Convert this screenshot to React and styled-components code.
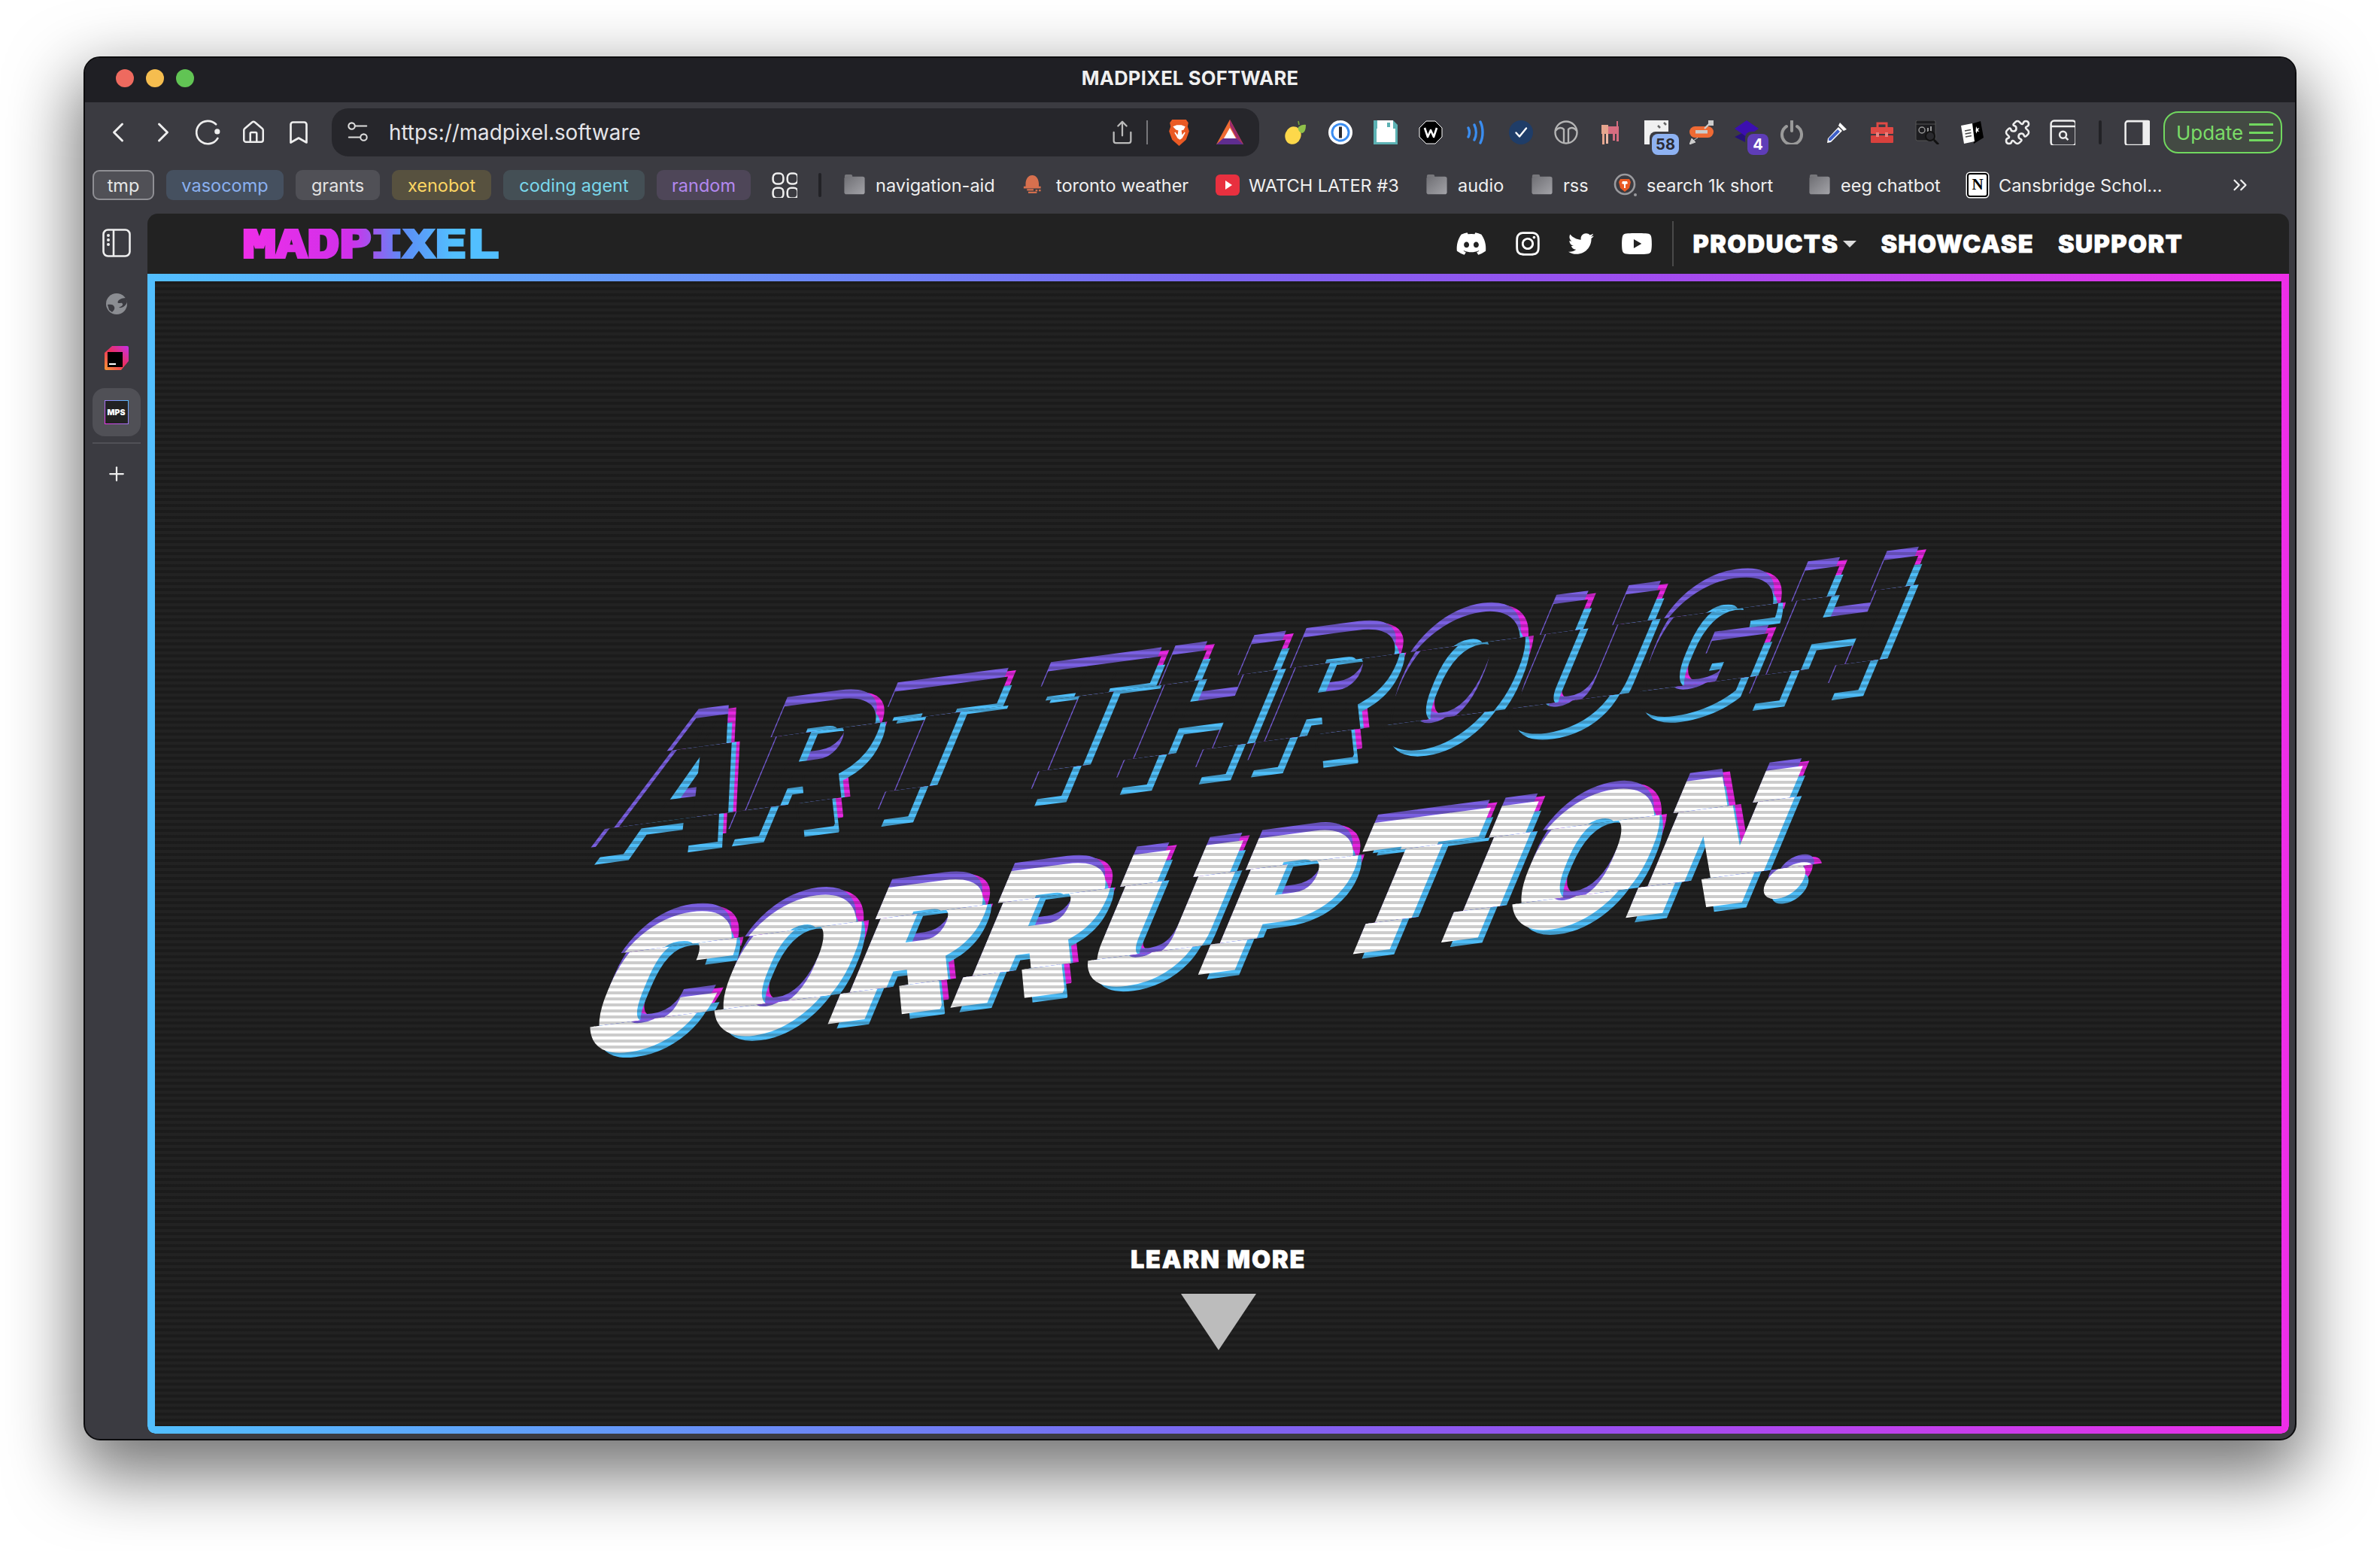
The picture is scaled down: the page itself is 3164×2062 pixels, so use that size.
import React from "react";
import styled, { createGlobalStyle } from "styled-components";
import { ChevronLeft, ChevronRight, House, Bookmark, Share, ChevronsRight, Plus, Puzzle } from "lucide-react";
import { FaDiscord, FaInstagram, FaTwitter, FaYoutube } from "react-icons/fa";

const Global = createGlobalStyle`
  html, body { margin: 0; padding: 0; background: #fff; }
  * { box-sizing: border-box; }
  body { font-family: Inter, "Liberation Sans", sans-serif; }
`;

const Desktop = styled.div`
  width: 3164px;
  height: 2062px;
  padding: 75px 111px 147px 111px;
  background: #fff;
  overflow: hidden;
`;
const Win = styled.div`
  width: 2942px;
  height: 1840px;
  display: flex;
  flex-direction: column;
  background: #3b3b41;
  border: 2px solid #0c0c0e;
  border-radius: 22px;
  overflow: hidden;
  box-shadow: 0 36px 90px 10px rgba(0, 0, 0, 0.55);
`;
const TitleBar = styled.div`
  position: relative;
  height: 59px;
  flex: none;
  background: #1f1f24;
  display: flex;
  align-items: center;
  justify-content: center;
  padding-bottom: 6px;
`;
const Lights = styled.div`
  position: absolute;
  left: 41px;
  top: 15px;
  display: flex;
  gap: 16px;
`;
const Light = styled.span`
  width: 24px;
  height: 24px;
  border-radius: 50%;
  background: ${(p) => p.$c};
`;
const WinTitle = styled.div`
  color: #f0f0f0;
  font-size: 25.6px;
  font-weight: 700;
  letter-spacing: 0.2px;
`;
const Toolbar = styled.div`
  height: 80px;
  flex: none;
  display: flex;
  align-items: center;
  padding-left: 14px;
`;
const NavBtn = styled.div`
  width: ${(p) => p.$w || 60}px;
  height: 60px;
  flex: none;
  display: flex;
  align-items: center;
  justify-content: center;
  color: #eee;
  position: relative;
`;
const UrlBar = styled.div`
  width: 1233px;
  height: 64px;
  margin: 0 18px 0 14px;
  flex: none;
  display: flex;
  align-items: center;
  border-radius: 22px;
  background: #26262b;
  padding-left: 20px;
  padding-right: 20px;
  color: #e4e4e8;
`;
const UrlText = styled.div`
  margin-left: 26px;
  font-size: 27.8px;
  font-weight: 400;
  flex: 1;
`;
const UrlSep = styled.span`
  width: 2px;
  height: 32px;
  background: #77777b;
  margin: 0 23px 0 15px;
`;
const UrlGap = styled.span`
  width: 30px;
  flex: none;
`;
const ToolSep = styled.span`
  width: 4px;
  height: 32px;
  border-radius: 2px;
  background: #222226;
  margin: 0 ${(p) => p.$mr || 20}px 0 ${(p) => p.$ml || 0}px;
  flex: none;
`;
const Badge = styled.span`
  position: absolute;
  right: ${(p) => p.$r}px;
  bottom: 0;
  min-width: ${(p) => p.$w}px;
  height: 28px;
  padding: 0 5px;
  border-radius: 8px;
  background: ${(p) => p.$bg};
  color: ${(p) => p.$fg};
  font-size: 20px;
  font-weight: 700;
  line-height: 28px;
  text-align: center;
  box-shadow: -3px -3px 0 #3b3b41;
`;
const UpdateBtn = styled.div`
  width: 158px;
  height: 56px;
  margin-left: 8px;
  flex: none;
  display: flex;
  align-items: center;
  justify-content: space-between;
  padding: 0 10px 0 15px;
  border: 2px solid #71d85f;
  border-radius: 20px;
  background: #434a43;
  color: #7bdc68;
  font-size: 26px;
`;
const Bars = styled.span`
  width: 32px;
  height: 24px;
  border-top: 3px solid #71d85f;
  border-bottom: 3px solid #71d85f;
  position: relative;
  &::after {
    content: "";
    position: absolute;
    left: 0;
    right: 0;
    top: 7.5px;
    height: 3px;
    background: #71d85f;
  }
`;
const BookmarkRow = styled.div`
  height: 40px;
  margin: 10px 0 18px;
  flex: none;
  display: flex;
  align-items: center;
  padding-left: 10px;
`;
const Chip = styled.div`
  width: ${(p) => p.$w}px;
  height: 40px;
  flex: none;
  margin-right: 16px;
  display: flex;
  align-items: center;
  justify-content: center;
  border-radius: 9px;
  font-size: 23.5px;
  background: ${(p) => p.$bg};
  color: ${(p) => p.$fg};
  ${(p) => (p.$active ? "border: 2px solid #8f8f94;" : "")}
`;
const Mark = styled.div`
  width: ${(p) => p.$w}px;
  flex: none;
  display: flex;
  align-items: center;
  gap: ${(p) => p.$gap || 13}px;
  padding-left: ${(p) => p.$pl || 0}px;
  color: #f0f0f0;
  font-size: 23.5px;
  white-space: nowrap;
`;
const More = styled.div`
  margin-left: 87px;
  display: flex;
  color: #f0f0f0;
`;
const NotionBox = styled.span`
  width: 28px;
  height: 32px;
  background: #fff;
  border: 2.5px solid #000;
  border-radius: 4px;
  color: #000;
  font-family: "Liberation Serif", serif;
  font-weight: 700;
  font-size: 21px;
  line-height: 27px;
  text-align: center;
  flex: none;
  box-shadow: 0 0 0 1.5px #fff;
`;
const Body = styled.div`
  flex: 1;
  display: flex;
  min-height: 0;
  padding-right: 8px;
  padding-bottom: 7px;
`;
const Sidebar = styled.div`
  width: 83px;
  flex: none;
  display: flex;
  flex-direction: column;
  align-items: center;
  color: #eee;
  padding-top: 19px;
`;
const SideSlot = styled.div`
  width: 64px;
  height: ${(p) => p.$h}px;
  margin-top: ${(p) => p.$mt || 0}px;
  flex: none;
  display: flex;
  align-items: center;
  justify-content: center;
  border-radius: 16px;
  background: ${(p) => (p.$active ? "#505056" : "transparent")};
`;
const SideRule = styled.div`
  width: 64px;
  height: 2px;
  background: #505056;
  margin: 8px 0 20px;
  flex: none;
`;
const MpsTile = styled.div`
  width: 32px;
  height: 32px;
  display: flex;
  align-items: center;
  justify-content: center;
  background: #222;
  border: 1px solid;
  border-image: linear-gradient(45deg, #ee2ee8, #52bfff) 1;
  color: #fff;
  font-size: 10.5px;
  font-weight: 900;
`;
const Page = styled.div`
  flex: 1;
  min-width: 0;
  display: flex;
  flex-direction: column;
  background: #222222;
  border-radius: 14px 14px 10px 10px;
  overflow: hidden;
`;
const SiteNav = styled.div`
  height: 80px;
  flex: none;
  display: flex;
  align-items: center;
  padding: 0 141px 0 127px;
  color: #fff;
`;
const Logo = styled.div`
  font-family: "DejaVu Sans Mono", monospace;
  font-weight: 700;
  font-size: 55px;
  line-height: 40px;
  height: 40px;
  width: 258px;
  letter-spacing: -1px;
  white-space: nowrap;
  -webkit-text-stroke: 3.5px transparent;
  background: linear-gradient(90deg, #ee2ee8 0%, #d030ea 42%, #5d8bf5 62%, #52bfff 82%);
  -webkit-background-clip: text;
  background-clip: text;
  color: transparent;
  transform: scaleX(1.32);
  transform-origin: left center;
`;
const Social = styled.div`
  margin-left: auto;
  display: flex;
  align-items: center;
  gap: 36px;
  font-size: 36px;
`;
const NavSep = styled.span`
  width: 2px;
  height: 60px;
  background: #4a4a4a;
  margin: 0 26px 0 26px;
`;
const NavLink = styled.div`
  display: flex;
  align-items: center;
  font-size: 32.5px;
  font-weight: 900;
  letter-spacing: 1.3px;
  -webkit-text-stroke: 0.6px #fff;
  margin-left: ${(p) => p.$ml || 0}px;
  white-space: nowrap;
`;
const Caret = styled.span`
  width: 0;
  height: 0;
  border-left: 9px solid transparent;
  border-right: 9px solid transparent;
  border-top: 9px solid #ddd;
  margin-left: 6px;
`;
const Frame = styled.div`
  flex: 1;
  min-height: 0;
  padding: 10px;
  background: linear-gradient(90deg, #52bfff 0%, #7b66f0 50%, #9a4ff0 68%, #ee2ee8 100%);
  border-radius: 0 0 10px 10px;
`;
const Hero = styled.div`
  position: relative;
  height: 100%;
  background: #222;
  display: flex;
  flex-direction: column;
  align-items: center;
  overflow: hidden;
`;
const Scan = styled.div`
  position: absolute;
  inset: 0;
  z-index: 2;
  pointer-events: none;
  background: repeating-linear-gradient(180deg, rgba(0, 0, 0, 0.2) 0 4px, transparent 4px 8px);
`;
const TitleArea = styled.div`
  flex: 1;
  min-height: 0;
  display: flex;
  align-items: center;
  justify-content: center;
  padding: 114px 0 0 60px;
`;
const Title = styled.h1`
  margin: 0;
  display: flex;
  flex-direction: column;
  align-items: flex-end;
  gap: 30px;
  font-weight: 900;
  font-family: Roboto, Inter, sans-serif;
  transform: matrix(1, -0.133, -0.42, 1, 0, 0);
`;
const Line = styled.div`
  position: relative;
  font-size: 246px;
  line-height: 1;
  white-space: nowrap;
  margin-right: ${(p) => p.$mr}px;
  transform: scaleX(${(p) => p.$sx});
  transform-origin: right center;
  -webkit-text-stroke: ${(p) => p.$sw}px ${(p) => p.$color};
`;
const Slice = styled.span`
  display: block;
  color: ${(p) => p.$color};
  text-shadow: 12px 11px 0 #4fbdf7, -3px -14px 0 #7a60e0, 9px -9px 0 #e528e0;
  clip-path: inset(${(p) => p.$clip});
  transform: translateX(${(p) => p.$dx}px);
  ${(p) => (p.$over ? "position: absolute; inset: 0;" : "")}
`;
const LearnMore = styled.div`
  position: relative;
  z-index: 3;
  display: flex;
  flex-direction: column;
  align-items: center;
  padding-bottom: 101px;
`;
const LearnText = styled.div`
  color: #fff;
  font-size: 32.5px;
  line-height: 24px;
  font-weight: 900;
  letter-spacing: 1.8px;
  -webkit-text-stroke: 0.6px #fff;
`;
const Arrow = styled.div`
  width: 0;
  height: 0;
  margin-top: 33px;
  border-left: 50px solid transparent;
  border-right: 50px solid transparent;
  border-top: 75px solid #bcbcbc;
`;

const Sv = ({ s = 32, vb = "0 0 32 32", children }) => (
  <svg width={s} height={s} viewBox={vb} fill="none" xmlns="http://www.w3.org/2000/svg">
    {children}
  </svg>
);

const Reload = () => (
  <Sv s={36}>
    <path d="M25 6.5A13.5 13.5 0 1 0 27 23" stroke="#eee" strokeWidth="2.4" strokeLinecap="round" />
    <circle cx="26.5" cy="15" r="3.2" fill="#eee" />
  </Sv>
);
const Tune = () => (
  <Sv s={30}>
    <circle cx="7" cy="7" r="4.5" stroke="#ddd" strokeWidth="2.2" />
    <path d="M12 7h16M3 23h16" stroke="#ddd" strokeWidth="2.2" strokeLinecap="round" />
    <circle cx="24" cy="23" r="4.5" stroke="#ddd" strokeWidth="2.2" />
  </Sv>
);
const BraveLion = () => (
  <Sv s={37} vb="0 0 32 36">
    <path d="M7 1h18l3 4-1 5 2 6-4 11-9 8-9-8-4-11 2-6-1-5z" fill="#ea5a24" />
    <path d="M8 10l5-2h6l5 2-2 4-3 1 1 6 3-4 1 1-4 7-3 2-3-2-4-7 1-1 3 4 1-6-3-1z" fill="#fff" />
  </Sv>
);
const Bat = () => (
  <Sv s={38} vb="0 0 38 38">
    <path d="M19 2L37 35H1z" fill="#ef6b34" />
    <path d="M19 2L37 35 28 27 19 10z" fill="#9e2a6b" />
    <path d="M1 35l9-8h18l9 8z" fill="#5f2d8f" />
    <path d="M19 13l8 14H11z" fill="#fff" />
  </Sv>
);
const Lemon = () => (
  <Sv>
    <ellipse cx="13" cy="20" rx="10.5" ry="12" fill="#fdd84a" transform="rotate(20 13 20)" />
    <path d="M19 8c3-3 8-4 10-3 0 5-1 10-5 11-4-1-6-5-5-8z" fill="#8fc04a" transform="translate(1 1)" />
    <path d="M21 6L20 1" stroke="#7aa83a" strokeWidth="1.6" />
  </Sv>
);
const OnePass = () => (
  <Sv>
    <circle cx="16" cy="16" r="16" fill="#fff" />
    <circle cx="16" cy="16" r="12.5" fill="#3b8df0" />
    <circle cx="16" cy="16" r="9.5" fill="#fff" />
    <rect x="14" y="8.5" width="4" height="15" fill="#2b2b2f" />
  </Sv>
);
const Floppy = () => (
  <Sv>
    <path d="M0 0h26l6 6v26H0z" fill="#5cb1b3" />
    <path d="M5 0h21v11h3v18H4V11h1z" fill="#fff" />
    <rect x="18" y="3" width="4" height="6" fill="#5cb1b3" />
  </Sv>
);
const Wind = () => (
  <Sv>
    <path d="M10 1h12l9 9v12l-9 9H10l-9-9V10z" fill="#000" stroke="#fff" strokeWidth="1" />
    <path d="M8 10l4 12 4-9 4 9 4-12" stroke="#fff" strokeWidth="2.6" strokeLinejoin="round" />
  </Sv>
);
const Waves = () => (
  <Sv>
    <path d="M6 10c2 4 2 8 0 12M14 6c3 6 3 14 0 20M22 2c4 8 4 20 0 28" stroke="#3a8df0" strokeWidth="3.4" strokeLinecap="round" />
  </Sv>
);
const CheckC = () => (
  <Sv>
    <circle cx="16" cy="16" r="16" fill="#1f3d68" />
    <path d="M9.5 16.5l4.5 5 9-11" stroke="#fff" strokeWidth="2.4" strokeLinecap="round" strokeLinejoin="round" />
  </Sv>
);
const TCircle = () => (
  <Sv>
    <circle cx="16" cy="16" r="14.5" stroke="#b5b5b5" strokeWidth="2.4" />
    <path d="M2 14c3-5 9-5 11-2v18M30 14c-3-5-9-5-11-2v18" stroke="#b5b5b5" strokeWidth="2.4" />
  </Sv>
);
const Cat = () => (
  <Sv>
    <rect x="9" y="8" width="17" height="10" fill="#d76d80" />
    <rect x="3" y="6" width="9" height="12" fill="#e5a58e" />
    <rect x="4" y="18" width="3" height="14" fill="#e5a58e" />
    <rect x="9" y="18" width="3" height="13" fill="#f0b9a5" />
    <rect x="18" y="18" width="3" height="9" fill="#d76d80" />
    <rect x="23" y="10" width="3" height="18" fill="#d76d80" />
    <rect x="23" y="1" width="2" height="8" fill="#d76d80" />
  </Sv>
);
const Doc = () => (
  <Sv>
    <rect width="32" height="32" fill="#f0f0f0" />
    <path d="M18 7l3 3M26 3l3 3" stroke="#666" strokeWidth="2.5" />
  </Sv>
);
const Pill = () => (
  <Sv>
    <rect x="0" y="8" width="32" height="15" rx="7.5" fill="#ef6a34" />
    <rect x="8" y="13" width="16" height="4.5" fill="#ccc" />
    <path d="M20 11l6-6" stroke="#ccc" strokeWidth="2.4" />
    <rect x="25" y="0" width="7" height="7" fill="#ccc" />
    <path d="M11 23l-6 4M0 32l3-8 5 5z" stroke="#ccc" fill="#ccc" strokeWidth="1" />
  </Sv>
);
const Diamond = () => (
  <Sv>
    <path d="M16 14L32 22 16 30 0 22z" fill="#26107a" />
    <path d="M16 0l16 11-16 11L0 11z" fill="#3c0fb0" />
  </Sv>
);
const Power = () => (
  <Sv>
    <path d="M9 8a13 13 0 1 0 14 0" stroke="#9a9a9a" strokeWidth="4" strokeLinecap="round" />
    <path d="M16 1v13" stroke="#9a9a9a" strokeWidth="4" strokeLinecap="round" />
  </Sv>
);
const Dropper = () => (
  <Sv>
    <path d="M20 3l9 9-4 2-7-7z" fill="#fff" />
    <path d="M18 9l5 5L8 29l-5 1 1-6z" fill="#fff" />
    <path d="M17 12l3 3L8 27l-3 0 0-3z" fill="#3e5fc8" />
  </Sv>
);
const Toolbox = () => (
  <Sv>
    <path d="M10 9V4h12v5" stroke="#e04a45" strokeWidth="3" />
    <rect x="1" y="9" width="30" height="9" rx="1" fill="#e04a45" />
    <rect x="1" y="20" width="30" height="10" rx="1" fill="#d9413d" />
    <rect x="8" y="16" width="4" height="6" fill="#e9827e" />
    <rect x="20" y="16" width="4" height="6" fill="#e9827e" />
  </Sv>
);
const Chart = () => (
  <Sv>
    <rect x="1" y="0" width="26" height="27" rx="2" fill="#1d1d20" stroke="#555" />
    <path d="M1 5h26" stroke="#555" />
    <circle cx="9" cy="13" r="4" stroke="#999" strokeWidth="1.4" />
    <path d="M17 10v6M21 8v8" stroke="#999" strokeWidth="2" />
    <circle cx="20" cy="21" r="6" fill="#2a2a2e" stroke="#111" strokeWidth="2" />
    <path d="M25 26l6 6" stroke="#111" strokeWidth="3" />
  </Sv>
);
const Cards = () => (
  <Sv>
    <path d="M14 5l13-4 4 22-13 8z" fill="#000" />
    <path d="M21 8l1.5 3 3-1-2 3 2 2-3-.5-1 3-1-3z" fill="#fff" />
    <path d="M1 7l15-3 3 24-14 3z" fill="#fff" />
    <path d="M6 14l8-1.5M6.5 18l8-1.5M7 22l8-1.5" stroke="#444" strokeWidth="1.6" />
  </Sv>
);
const SearchWin = () => (
  <Sv s={34}>
    <rect x="1.5" y="1.5" width="31" height="31" rx="4" stroke="#eee" strokeWidth="2.4" />
    <path d="M1.5 8.5h31" stroke="#eee" strokeWidth="2.4" />
    <circle cx="16.5" cy="19" r="4.2" stroke="#eee" strokeWidth="2.4" />
    <path d="M20 22.5l3 3" stroke="#eee" strokeWidth="2.4" />
  </Sv>
);
const SidePanelRight = () => (
  <Sv s={34}>
    <rect x="1.5" y="2" width="31" height="30" rx="3" stroke="#eee" strokeWidth="2.4" />
    <path d="M23 2h7a3 3 0 0 1 3 3v24a3 3 0 0 1-3 3h-7z" fill="#eee" />
  </Sv>
);
const Grid = () => (
  <Sv s={34}>
    {[[1.5, 1.5], [19.5, 1.5], [1.5, 19.5], [19.5, 19.5]].map(([x, y]) => (
      <rect key={x + "-" + y} x={x} y={y} width="13" height="13" rx="5" stroke="#eee" strokeWidth="2.4" />
    ))}
  </Sv>
);
const Folder = () => (
  <Sv s={30} vb="0 0 30 32">
    <defs>
      <linearGradient id="fg" x1="0" y1="0" x2="1" y2="1">
        <stop offset="0" stopColor="#6f6f74" />
        <stop offset="1" stopColor="#a3a3a8" />
      </linearGradient>
    </defs>
    <path d="M1 3a2 2 0 0 1 2-2h7a2 2 0 0 1 2 2v2H1z" fill="#77777b" />
    <rect x="0.5" y="4" width="29" height="25" rx="3" fill="url(#fg)" />
  </Sv>
);
const Dome = () => (
  <Sv s={28}>
    <path d="M14 1c7 0 10 7 10 13v4h3v3H1v-3h3v-4C4 8 7 1 14 1z" fill="#d7704e" />
    <rect x="6" y="22" width="10" height="2.5" fill="#d7704e" />
    <rect x="8" y="26" width="13" height="2.5" fill="#d7704e" />
    <rect x="19" y="23" width="3" height="2.5" fill="#d7704e" />
    <rect x="24" y="23" width="3" height="2.5" fill="#d7704e" />
  </Sv>
);
const YtRed = () => (
  <Sv>
    <rect y="2" width="32" height="28" rx="6" fill="#e8303f" />
    <path d="M13 10l9 6-9 6z" fill="#fff" />
  </Sv>
);
const BraveRing = () => (
  <Sv>
    <circle cx="15" cy="15" r="13" fill="#3b3b41" stroke="#9a9a9e" strokeWidth="2.6" />
    <path d="M9 8h12l2 4-2 8-6 5-6-5-2-8z" fill="#ea5a24" />
    <path d="M12 11h6l1 3-3 1v5h-2v-5l-3-1z" fill="#fff" />
    <circle cx="29" cy="29" r="2" fill="#9a9a9e" />
  </Sv>
);
const PanelLeft = () => (
  <Sv s={38} vb="0 0 38 38">
    <rect x="1.5" y="1.5" width="35" height="35" rx="6" stroke="#eee" strokeWidth="2.6" />
    <path d="M15 2v34" stroke="#eee" strokeWidth="2.6" />
    <circle cx="8" cy="9" r="2" fill="#eee" />
    <circle cx="8" cy="15" r="2" fill="#eee" />
    <circle cx="8" cy="21" r="2" fill="#eee" />
  </Sv>
);
const Globe = () => (
  <Sv s={28} vb="0 0 28 28">
    <circle cx="14" cy="14" r="14" fill="#8b8d92" />
    <path d="M2 15c5-1 8 0 9 3s-1 5-3 7l-4-3zM27 6c-4 0-8 1-10 3s-2 4 0 4 4-1 5 1-3 4-5 5c5 1 10-3 11-8z" fill="#3b3b41" />
  </Sv>
);
const JetTerm = () => (
  <Sv s={32}>
    <defs>
      <linearGradient id="jt" x1="0" y1="1" x2="1" y2="0">
        <stop offset="0" stopColor="#f69a30" />
        <stop offset="0.5" stopColor="#ec2f5c" />
        <stop offset="1" stopColor="#c62fe8" />
      </linearGradient>
    </defs>
    <path d="M10 0h20a2 2 0 0 1 2 2v18l-10 12H2a2 2 0 0 1-2-2V9z" fill="url(#jt)" />
    <rect x="4" y="8" width="20" height="20" fill="#000" />
    <rect x="6" y="23" width="9" height="2" fill="#fff" />
  </Sv>
);

const chips = [
  { t: "tmp", w: 82, bg: "#505056", fg: "#e6e6e6", active: true },
  { t: "vasocomp", w: 156, bg: "#45505f", fg: "#8ab0f0" },
  { t: "grants", w: 112, bg: "#505056", fg: "#e4e4e4" },
  { t: "xenobot", w: 132, bg: "#57513f", fg: "#fdd663" },
  { t: "coding agent", w: 188, bg: "#444f55", fg: "#7ad8ec" },
  { t: "random", w: 125, bg: "#4e4658", fg: "#b388f0" },
];
const marks = [
  { t: "navigation-aid", w: 239, I: Folder },
  { t: "toronto weather", w: 256, I: Dome, gap: 16 },
  { t: "WATCH LATER #3", w: 279, I: YtRed, gap: 12 },
  { t: "audio", w: 140, I: Folder },
  { t: "rss", w: 110, I: Folder },
  { t: "search 1k short", w: 259, I: BraveRing, gap: 12 },
  { t: "eeg chatbot", w: 211, I: Folder },
];
const exts = [Lemon, OnePass, Floppy, Wind, Waves, CheckC, TCircle, Cat];

function TitleLine({ text, color, sw, sx, mr }) {
  return (
    <Line $sw={sw} $sx={sx} $mr={mr} $color={color}>
      <Slice $color={color} $dx={0} $clip="29% -60px 31% -60px">{text}</Slice>
      <Slice $over $color={color} $dx={-7} aria-hidden="true" $clip="-30px -60px 71% -60px">{text}</Slice>
      <Slice $over $color={color} $dx={-12} aria-hidden="true" $clip="69% -60px -30px -60px">{text}</Slice>
    </Line>
  );
}

export default function App() {
  return (
    <>
      <Global />
      <Desktop>
        <Win>
          <TitleBar>
            <Lights>
              <Light $c="#ee6a5f" />
              <Light $c="#f5bd4f" />
              <Light $c="#61c454" />
            </Lights>
            <WinTitle>MADPIXEL SOFTWARE</WinTitle>
          </TitleBar>
          <Toolbar>
            <NavBtn><ChevronLeft size={44} strokeWidth={1.6} /></NavBtn>
            <NavBtn><ChevronRight size={44} strokeWidth={1.6} /></NavBtn>
            <NavBtn><Reload /></NavBtn>
            <NavBtn><House size={34} strokeWidth={1.8} /></NavBtn>
            <NavBtn><Bookmark size={36} strokeWidth={1.8} /></NavBtn>
            <UrlBar>
              <Tune />
              <UrlText>https://madpixel.software</UrlText>
              <Share size={34} strokeWidth={1.6} color="#bbb" />
              <UrlSep />
              <BraveLion />
              <UrlGap />
              <Bat />
            </UrlBar>
            {exts.map((E, i) => (
              <NavBtn key={i}><E /></NavBtn>
            ))}
            <NavBtn><Doc /><Badge $r={0} $w={36} $bg="#8eb2f2" $fg="#2b2b33">58</Badge></NavBtn>
            <NavBtn><Pill /></NavBtn>
            <NavBtn><Diamond /><Badge $r={1} $w={28} $bg="#5f3db8" $fg="#fff">4</Badge></NavBtn>
            <NavBtn><Power /></NavBtn>
            <NavBtn><Dropper /></NavBtn>
            <NavBtn><Toolbox /></NavBtn>
            <NavBtn><Chart /></NavBtn>
            <NavBtn><Cards /></NavBtn>
            <NavBtn><Puzzle size={36} strokeWidth={1.7} /></NavBtn>
            <NavBtn><SearchWin /></NavBtn>
            <ToolSep $ml={18} />
            <NavBtn $w={54}><SidePanelRight /></NavBtn>
            <UpdateBtn>Update<Bars /></UpdateBtn>
          </Toolbar>
          <BookmarkRow>
            {chips.map((c) => (
              <Chip key={c.t} $w={c.w} $bg={c.bg} $fg={c.fg} $active={c.active}>{c.t}</Chip>
            ))}
            <Mark $w={74} $pl={12}><Grid /></Mark>
            <ToolSep $mr={29} />
            {marks.map(({ t, w, I, gap }) => (
              <Mark key={t} $w={w} $gap={gap}><I />{t}</Mark>
            ))}
            <Mark $w={261} $gap={14}><NotionBox>N</NotionBox>Cansbridge Schol...</Mark>
            <More><ChevronsRight size={30} strokeWidth={1.8} /></More>
          </BookmarkRow>
          <Body>
            <Sidebar>
              <SideSlot $h={40}><PanelLeft /></SideSlot>
              <SideSlot $h={28} $mt={47}><Globe /></SideSlot>
              <SideSlot $h={32} $mt={42}><JetTerm /></SideSlot>
              <SideSlot $h={64} $mt={24} $active><MpsTile>MPS</MpsTile></SideSlot>
              <SideRule />
              <SideSlot $h={40}><Plus size={30} strokeWidth={1.8} /></SideSlot>
            </Sidebar>
            <Page>
              <SiteNav>
                <Logo>MADPIXEL</Logo>
                <Social>
                  <FaDiscord size={42} />
                  <FaInstagram size={36} />
                  <FaTwitter size={34} />
                  <FaYoutube size={42} />
                </Social>
                <NavSep />
                <NavLink>PRODUCTS<Caret /></NavLink>
                <NavLink $ml={32}>SHOWCASE</NavLink>
                <NavLink $ml={32}>SUPPORT</NavLink>
              </SiteNav>
              <Frame>
                <Hero>
                  <TitleArea>
                    <Title>
                      <TitleLine text="ART THROUGH" color="#222222" sw={3} sx={1.008} mr={40} />
                      <TitleLine text="CORRUPTION." color="#ffffff" sw={6} sx={1.016} mr={4} />
                    </Title>
                  </TitleArea>
                  <LearnMore>
                    <LearnText>LEARN MORE</LearnText>
                    <Arrow />
                  </LearnMore>
                  <Scan />
                </Hero>
              </Frame>
            </Page>
          </Body>
        </Win>
      </Desktop>
    </>
  );
}
